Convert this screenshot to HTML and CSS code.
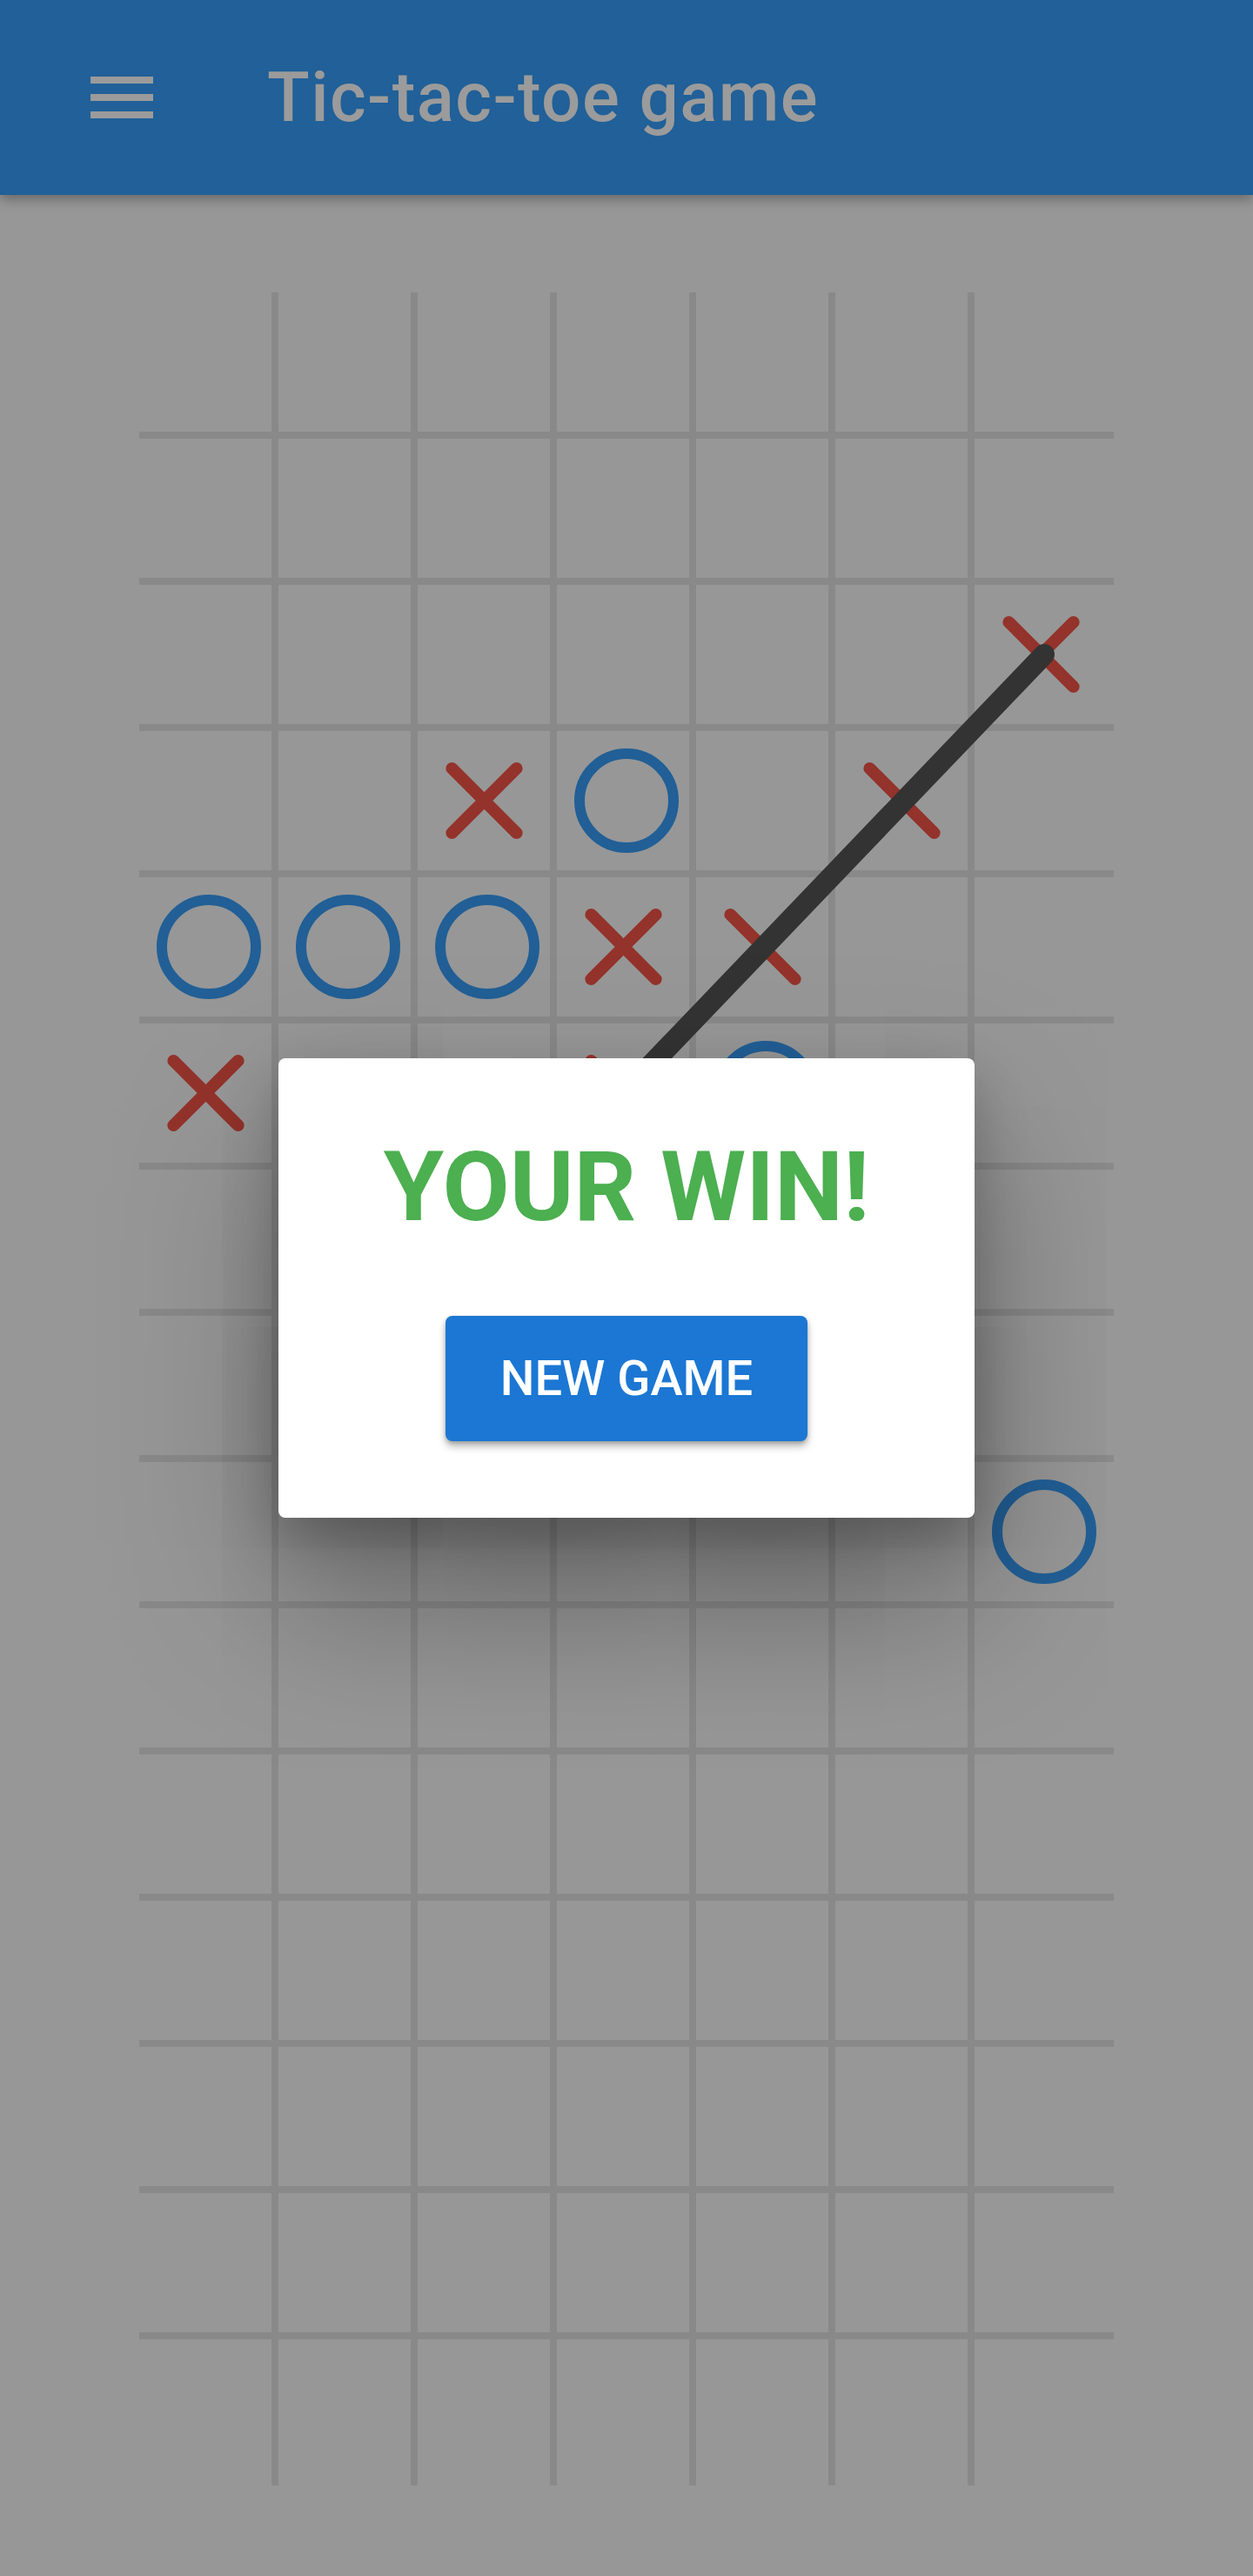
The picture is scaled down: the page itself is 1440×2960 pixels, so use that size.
FILE: index.html
```html
<!DOCTYPE html>
<html lang="en">
<head>
<meta charset="utf-8">
<title>Tic-tac-toe game</title>
<link rel="stylesheet" href="styles.css">
</head>
<body>
<header class="appbar">
  <button class="nav-btn" aria-label="Menu">
    <svg class="menu-icon" viewBox="0 0 24 24" width="96" height="96" aria-hidden="true">
      <rect x="3" y="6" width="18" height="2"/>
      <rect x="3" y="11" width="18" height="2"/>
      <rect x="3" y="16" width="18" height="2"/>
    </svg>
  </button>
  <h1 class="title">Tic-tac-toe game</h1>
</header>

<main class="content">
  <div class="board-wrap">
    <div class="board">
      <!-- row 0 -->
      <div class="cell"></div><div class="cell"></div><div class="cell"></div><div class="cell"></div><div class="cell"></div><div class="cell"></div><div class="cell"></div>
      <!-- row 1 -->
      <div class="cell"></div><div class="cell"></div><div class="cell"></div><div class="cell"></div><div class="cell"></div><div class="cell"></div><div class="cell"></div>
      <!-- row 2 -->
      <div class="cell"></div><div class="cell"></div><div class="cell"></div><div class="cell"></div><div class="cell"></div><div class="cell"></div><div class="cell"><span class="mark-x"></span></div>
      <!-- row 3 -->
      <div class="cell"></div><div class="cell"></div><div class="cell"><span class="mark-x"></span></div><div class="cell"><span class="mark-o"></span></div><div class="cell"></div><div class="cell"><span class="mark-x"></span></div><div class="cell"></div>
      <!-- row 4 -->
      <div class="cell"><span class="mark-o"></span></div><div class="cell"><span class="mark-o"></span></div><div class="cell"><span class="mark-o"></span></div><div class="cell"><span class="mark-x"></span></div><div class="cell"><span class="mark-x"></span></div><div class="cell"></div><div class="cell"></div>
      <!-- row 5 -->
      <div class="cell"><span class="mark-x"></span></div><div class="cell"></div><div class="cell"></div><div class="cell"><span class="mark-x"></span></div><div class="cell"><span class="mark-o"></span></div><div class="cell"></div><div class="cell"></div>
      <!-- row 6 -->
      <div class="cell"></div><div class="cell"></div><div class="cell"><span class="mark-x"></span></div><div class="cell"></div><div class="cell"></div><div class="cell"></div><div class="cell"></div>
      <!-- row 7 -->
      <div class="cell"></div><div class="cell"></div><div class="cell"></div><div class="cell"></div><div class="cell"></div><div class="cell"></div><div class="cell"></div>
      <!-- row 8 -->
      <div class="cell"></div><div class="cell"></div><div class="cell"></div><div class="cell"></div><div class="cell"></div><div class="cell"></div><div class="cell"><span class="mark-o"></span></div>
      <!-- row 9 -->
      <div class="cell"></div><div class="cell"></div><div class="cell"></div><div class="cell"></div><div class="cell"></div><div class="cell"></div><div class="cell"></div>
      <!-- row 10 -->
      <div class="cell"></div><div class="cell"></div><div class="cell"></div><div class="cell"></div><div class="cell"></div><div class="cell"></div><div class="cell"></div>
      <!-- row 11 -->
      <div class="cell"></div><div class="cell"></div><div class="cell"></div><div class="cell"></div><div class="cell"></div><div class="cell"></div><div class="cell"></div>
      <!-- row 12 -->
      <div class="cell"></div><div class="cell"></div><div class="cell"></div><div class="cell"></div><div class="cell"></div><div class="cell"></div><div class="cell"></div>
      <!-- row 13 -->
      <div class="cell"></div><div class="cell"></div><div class="cell"></div><div class="cell"></div><div class="cell"></div><div class="cell"></div><div class="cell"></div>
      <!-- row 14 -->
      <div class="cell"></div><div class="cell"></div><div class="cell"></div><div class="cell"></div><div class="cell"></div><div class="cell"></div><div class="cell"></div>
    </div>
    <svg class="win-line" viewBox="0 0 1120 2512" width="1120" height="2512" aria-hidden="true">
      <line x1="1040" y1="416" x2="396" y2="1088"/>
    </svg>
  </div>
</main>

<div class="overlay">
  <div class="dialog" role="dialog">
    <h2 class="dialog-title">YOUR WIN!</h2>
    <button class="btn-new">NEW GAME</button>
  </div>
</div>
</body>
</html>
```

FILE: styles.css
```css
* {
  box-sizing: border-box;
}

html, body {
  margin: 0;
  padding: 0;
}

body {
  background: #979797;
  font-family: Roboto, "Noto Sans", "Liberation Sans", sans-serif;
  min-height: 2960px;
  position: relative;
}

/* ---------- App bar ---------- */
.appbar {
  height: 224px;
  background: #216098;
  display: flex;
  align-items: center;
  box-shadow: 0 4px 14px rgba(0, 0, 0, 0.35);
  position: relative;
  z-index: 1;
}

.nav-btn {
  width: 96px;
  height: 96px;
  margin-left: 92px;
  padding: 0;
  border: 0;
  background: none;
  display: flex;
}

.menu-icon {
  fill: #9b9b9b;
}

.title {
  margin: 0 0 0 119px;
  font-size: 80px;
  line-height: 80px;
  font-weight: 500;
  color: #9b9b9b;
  letter-spacing: 1.4px;
}

/* ---------- Board ---------- */
.content {
  display: flex;
  justify-content: center;
  padding: 112px 0 112px;
}

.board-wrap {
  position: relative;
  width: 1120px;
  height: 2512px;
}

.board {
  display: grid;
  grid-template-columns: repeat(7, 160px);
  grid-template-rows: repeat(15, 168px);
}

.cell {
  border-right: 8px solid #898989;
  border-bottom: 8px solid #898989;
  display: flex;
  align-items: center;
  justify-content: center;
}

.cell:nth-child(7n) {
  border-right: 0;
}

.cell:nth-last-child(-n+7) {
  border-bottom: 0;
}

.mark-o {
  width: 120px;
  height: 120px;
  margin-left: 8px;
  border: 12px solid #215f96;
  border-radius: 50%;
}

.cell:nth-child(7n) .mark-o {
  margin-left: 0;
}

.mark-x {
  position: relative;
  width: 88px;
  height: 88px;
}

.cell:nth-child(7n) .mark-x {
  margin-right: 8px;
}

.mark-x::before,
.mark-x::after {
  content: "";
  position: absolute;
  left: 50%;
  top: 50%;
  width: 119px;
  height: 14px;
  margin: -7px 0 0 -59.5px;
  border-radius: 7px;
  background: #93332b;
}

.mark-x::before {
  transform: rotate(45deg);
}

.mark-x::after {
  transform: rotate(-45deg);
}

.win-line {
  position: absolute;
  left: 0;
  top: 0;
  pointer-events: none;
}

.win-line line {
  stroke: #333333;
  stroke-width: 24;
  stroke-linecap: round;
}

/* ---------- Dialog ---------- */
.overlay {
  position: absolute;
  inset: 0;
  z-index: 5;
  display: flex;
  align-items: center;
  justify-content: center;
}

.dialog {
  width: 800px;
  height: 528px;
  background: #ffffff;
  border-radius: 8px;
  padding: 92px 0 88px;
  display: flex;
  flex-direction: column;
  align-items: center;
  gap: 92px;
  box-shadow: 0 90px 190px rgba(0, 0, 0, 0.36), 0 24px 60px rgba(0, 0, 0, 0.22);
}

.dialog-title {
  margin: 0;
  font-size: 112px;
  line-height: 112px;
  font-weight: 700;
  color: #4caf50;
}

.btn-new {
  width: 416px;
  height: 144px;
  border: 0;
  border-radius: 8px;
  background: #1b77d3;
  color: #ffffff;
  font-family: Roboto, "Noto Sans", "Liberation Sans", sans-serif;
  font-size: 56px;
  line-height: 144px;
  font-weight: 500;
  letter-spacing: 0;
  padding: 0;
  box-shadow: 0 6px 10px rgba(0, 0, 0, 0.28), 0 2px 4px rgba(0, 0, 0, 0.18);
}
```
